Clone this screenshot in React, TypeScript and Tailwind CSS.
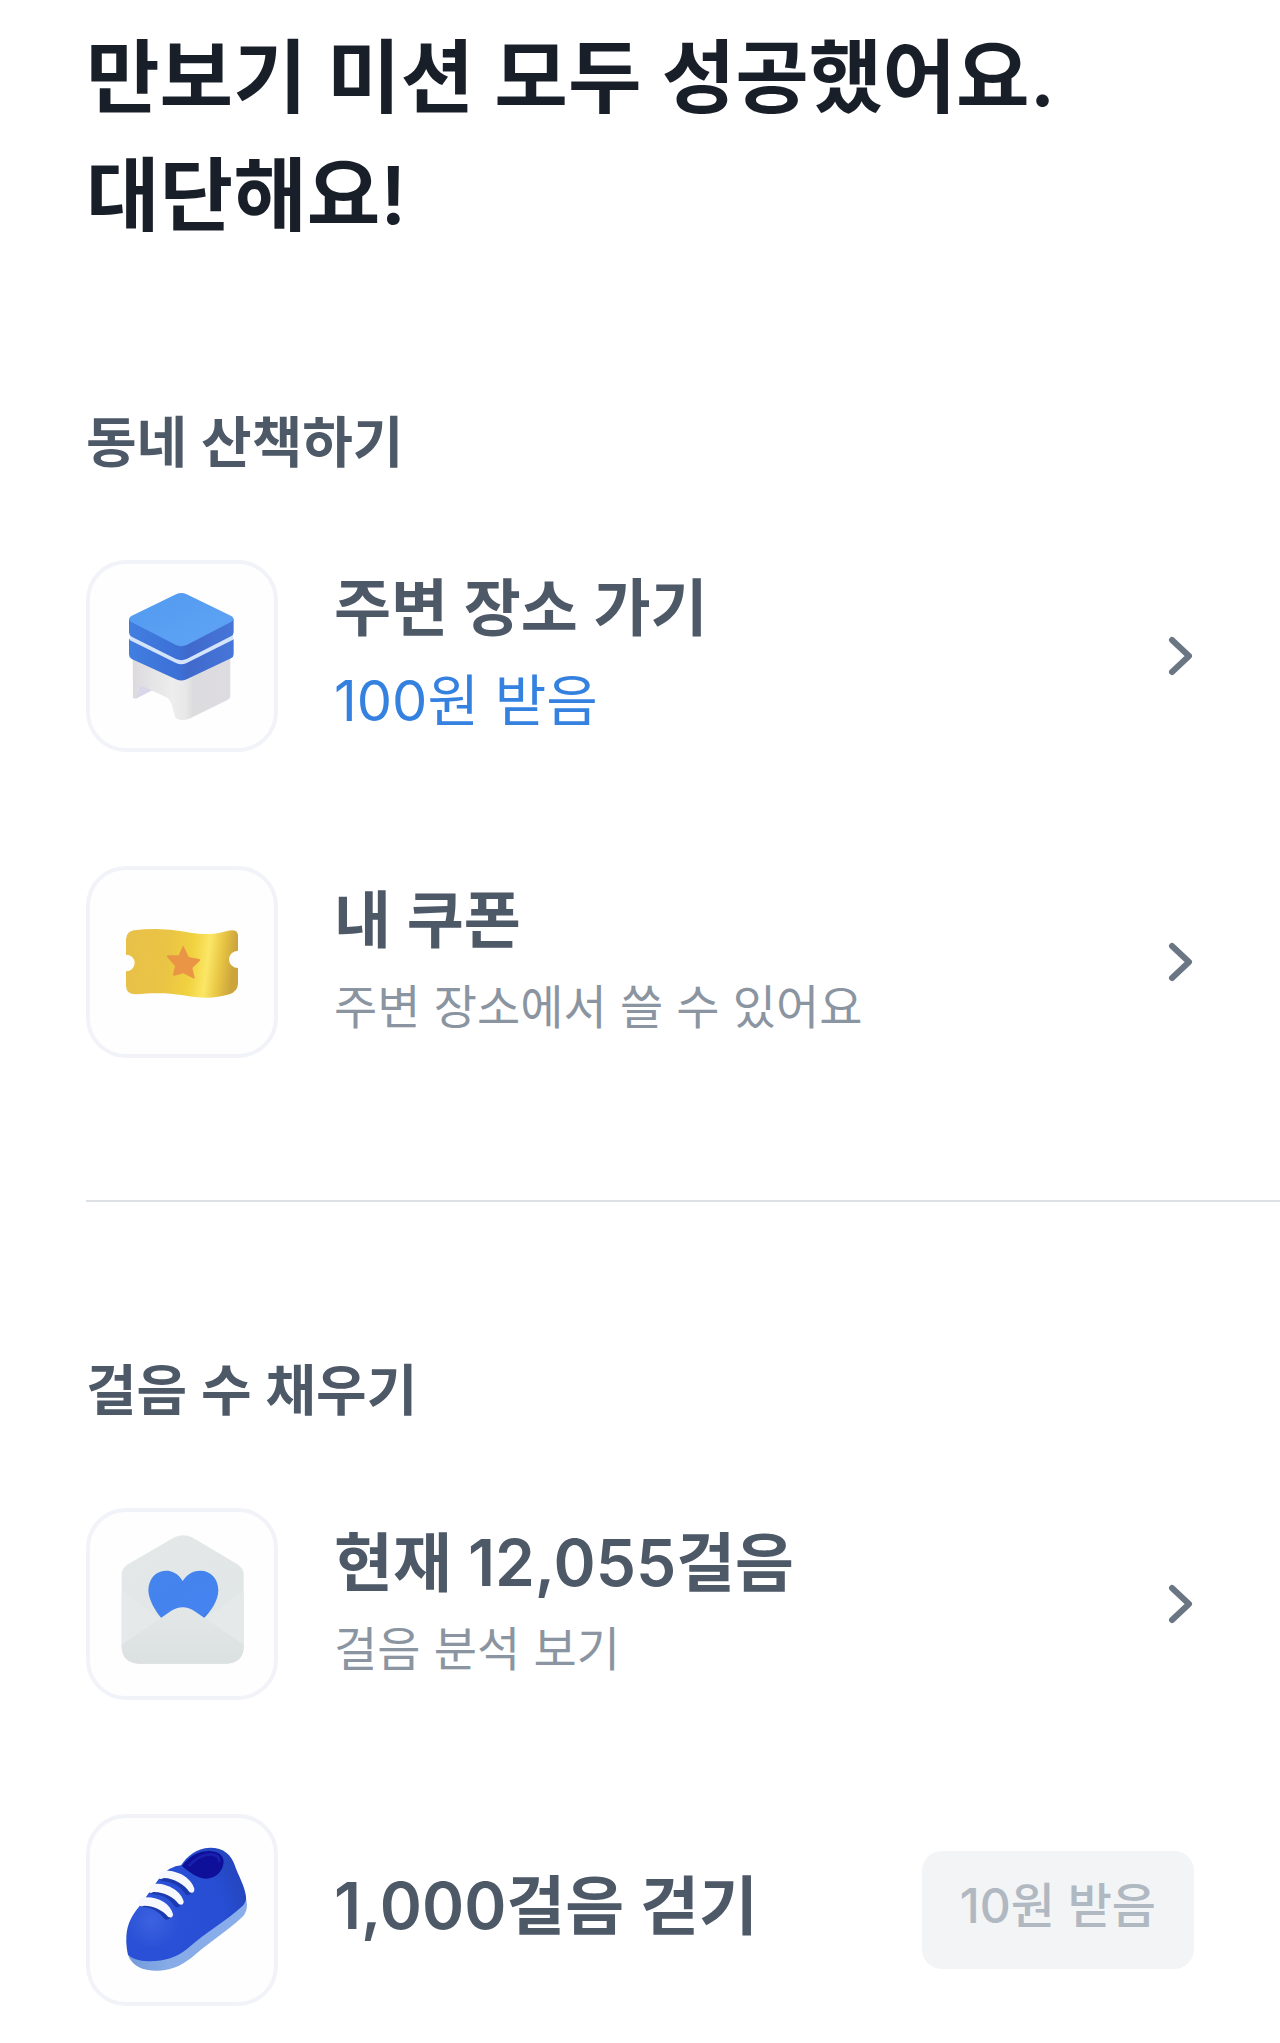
import type { ReactNode } from "react";

const fontStack = "font-[Inter,'Noto_Sans_CJK_KR',sans-serif]";

function StoolIcon() {
  return (
    <svg viewBox="60 57 552 552" className="h-full w-full" aria-hidden="true">
      <defs>
        <linearGradient id="stool-top" x1="0" y1="0" x2="1" y2="1">
          <stop offset="0" stopColor="#529bf0" />
          <stop offset="1" stopColor="#5fa3f5" />
        </linearGradient>
        <linearGradient id="stool-side" x1="0" y1="0" x2="1" y2="0">
          <stop offset="0" stopColor="#427ee0" />
          <stop offset="0.48" stopColor="#3c70d6" />
          <stop offset="0.56" stopColor="#4069cc" />
          <stop offset="1" stopColor="#4676d8" />
        </linearGradient>
        <linearGradient id="stool-leg" x1="0" y1="0" x2="1" y2="0">
          <stop offset="0" stopColor="#dcdade" />
          <stop offset="0.4" stopColor="#ededed" />
          <stop offset="0.54" stopColor="#e9e8e9" />
          <stop offset="0.62" stopColor="#dcdbdd" />
          <stop offset="1" stopColor="#dedce2" />
        </linearGradient>
      </defs>
      <path d="M196 462L250 434V400H196Z" fill="#d9d6ea" />
      <path
        d="M188 310H481V452Q481 460 474 464L356 522Q334 528 320 521Q315 518 312 504L305 478Q300 462 286 455L222 425Q212 421 208 430L200 456Q197 463 189 459Z"
        fill="url(#stool-leg)"
      />
      <path
        d="M177 288Q177 276 190 280H480Q491 276 491 288V328Q491 336 483 340L350 403Q334 410 318 403L185 342Q177 338 177 328Z"
        fill="url(#stool-side)"
      />
      <path d="M180 262H489V284L350 354Q334 362 318 354L180 286Z" fill="#d4e4fc" />
      <path
        d="M177 222H491V262Q491 270 483 274L350 342Q334 349 318 342L185 275Q177 271 177 262Z"
        fill="url(#stool-side)"
      />
      <path
        d="M318 148Q334 140 350 148L484 213Q497 221 484 230L350 300Q334 307 318 300L184 231Q171 222 184 213Z"
        fill="url(#stool-top)"
      />
    </svg>
  );
}

function CouponIcon() {
  return (
    <svg viewBox="60 60 552 552" className="h-full w-full" aria-hidden="true">
      <defs>
        <linearGradient id="coupon" x1="0" y1="0" x2="1" y2="0.08">
          <stop offset="0" stopColor="#e8c04a" />
          <stop offset="0.4" stopColor="#eac444" />
          <stop offset="0.62" stopColor="#f1d240" />
          <stop offset="0.76" stopColor="#fbe666" />
          <stop offset="0.88" stopColor="#e8c544" />
          <stop offset="1" stopColor="#cba43c" />
        </linearGradient>
      </defs>
      <path
        d="M168 266Q170 245 192 241Q270 231 345 245C390 255 435 254 462 245Q503 232 504 256V302A27 26 0 0 0 504 354V402Q502 425 478 433C430 448 385 444 340 436C290 427 240 429 196 433Q169 433 168 408V364A26 25 0 0 0 168 314Z"
        fill="url(#coupon)"
      />
      <path
        d="M341 289L356 321L388 327Q392 329 389 333L367 354L374 383Q373 387 369 385L340 370L313 377Q308 377 309 373L315 348L291 321Q289 316 294 316L326 316L338 289Q340 286 341 289Z"
        fill="#e99545"
      />
    </svg>
  );
}

function LetterIcon() {
  return (
    <svg viewBox="60 64 552 552" className="h-full w-full" aria-hidden="true">
      <defs>
        <linearGradient id="letter-back" x1="0" y1="0" x2="1" y2="1">
          <stop offset="0" stopColor="#e4e8e8" />
          <stop offset="1" stopColor="#e0e5e5" />
        </linearGradient>
        <linearGradient id="letter-front" x1="0" y1="0" x2="0" y2="1">
          <stop offset="0" stopColor="#e3e7e7" />
          <stop offset="1" stopColor="#dbe0e1" />
        </linearGradient>
        <linearGradient id="letter-heart" x1="0" y1="0" x2="1" y2="1">
          <stop offset="0" stopColor="#4484ec" />
          <stop offset="0.85" stopColor="#4583f0" />
          <stop offset="1" stopColor="#315fc0" />
        </linearGradient>
      </defs>
      <path
        d="M313 140Q340 127 366 140L502 221Q521 233 521 252V470Q519 516 470 519H206Q158 516 155 470V252Q155 233 174 221Z"
        fill="url(#letter-back)"
      />
      <path d="M155 300V462L272 384ZM521 300V462L402 384Z" fill="#e5e9e9" />
      <path
        d="M338 271C324 247 305 240 288 240C254 240 235 268 235 300C237 330 256 360 274 382H402C424 360 445 330 445 298C444 264 423 240 391 240C365 240 350 253 338 271Z"
        fill="url(#letter-heart)"
      />
      <path
        d="M155 462L302 362Q338 338 374 362L521 462V472Q519 516 470 519H206Q158 516 155 472Z"
        fill="url(#letter-front)"
      />
    </svg>
  );
}

function ShoeIcon() {
  return (
    <svg viewBox="60 52 552 552" className="h-full w-full" aria-hidden="true">
      <defs>
        <radialGradient id="shoe-body" gradientUnits="userSpaceOnUse" cx="245" cy="360" r="280">
          <stop offset="0" stopColor="#3d62e0" />
          <stop offset="0.3" stopColor="#2950d6" />
          <stop offset="0.8" stopColor="#264dd2" />
          <stop offset="1" stopColor="#2547c2" />
        </radialGradient>
        <linearGradient id="shoe-sole" x1="0" y1="0" x2="1" y2="0">
          <stop offset="0" stopColor="#7299da" />
          <stop offset="0.35" stopColor="#86abe6" />
          <stop offset="1" stopColor="#8aaeec" />
        </linearGradient>
      </defs>
      <path
        d="M169 420L174 462C186 497 220 511 265 510C310 509 345 488 375 462C425 420 475 389 516 350Q532 335 531 310L524 270Z"
        fill="url(#shoe-sole)"
      />
      <path
        d="M169 420C168 380 180 350 207 318L268 233Q300 195 333 194C350 168 378 143 420 141C462 141 484 163 494 193C505 225 524 255 528 288Q530 305 515 318C465 363 405 396 350 446C320 471 280 483 235 482Q190 480 174 462Q169 445 169 420Z"
        fill="url(#shoe-body)"
      />
      <path d="M336 196C360 163 390 150 420 151C447 153 461 165 461 184C459 211 438 234 408 234C378 232 357 213 336 196Z" fill="#0f109a" />
      <path d="M356 196C380 170 402 160 425 161C444 163 449 171 448 184" stroke="#1920ad" strokeWidth="8" fill="none" />
      <g fill="none" stroke="#1c39ae" strokeWidth="20" strokeLinecap="round">
        <path d="M280 232Q325 234 354 273" />
        <path d="M248 270Q296 272 322 310" />
        <path d="M218 308Q264 311 290 347" />
      </g>
      <g fill="#f7f8fd">
        <path d="M266 226Q268 210 288 210C329 210 365 234 373 264Q374 280 359 275C342 250 312 233 282 232Q264 240 266 226Z" />
        <path d="M235 266Q238 250 256 249C297 248 334 273 341 302Q341 316 327 311C311 288 280 273 250 274Q235 282 235 266Z" />
        <path d="M204 306Q206 291 224 290C266 288 302 310 309 341Q309 354 295 349C278 328 250 315 222 315Q206 321 204 306Z" />
      </g>
    </svg>
  );
}

function Chevron() {
  return (
    <svg viewBox="0 0 26 42" className="h-[42px] w-[26px] shrink-0" fill="none" aria-hidden="true">
      <path d="M4 5L21 21L4 37" stroke="#6b7684" strokeWidth="6" strokeLinecap="round" strokeLinejoin="round" />
    </svg>
  );
}

function IconTile({ children }: { children: ReactNode }) {
  return (
    <div className="size-48 shrink-0 overflow-hidden rounded-[40px] border-4 border-[#f1f3f8] bg-[#fefefe]">
      {children}
    </div>
  );
}

interface RowLinkProps {
  icon: ReactNode;
  title: string;
  large?: boolean;
  children: ReactNode;
}

function RowLink({ icon, title, large = false, children }: RowLinkProps) {
  return (
    <a href="#" className="flex items-center gap-14">
      <IconTile>{icon}</IconTile>
      <div className="flex min-w-0 flex-1 flex-col gap-1.5 pb-1">
        <p className={`leading-[88px] font-semibold text-[#4e5968] ${large ? "text-[64px]" : "text-[62px]"}`}>
          {title}
        </p>
        {children}
      </div>
      <Chevron />
    </a>
  );
}

function SectionTitle({ children }: { children: ReactNode }) {
  return <h2 className="text-[55px] leading-[80px] font-semibold text-[#4e5968]">{children}</h2>;
}

export default function App() {
  return (
    <main className={`bg-white pt-[18px] pb-9 text-[#191f28] ${fontStack}`}>
      <h1 className="px-[86px] text-[80px] leading-[118px] font-semibold">
        만보기 미션 모두 성공했어요.
        <br />
        대단해요!
      </h1>

      <section className="mt-[148px] px-[86px]">
        <SectionTitle>동네 산책하기</SectionTitle>
        <div className="mt-[78px] flex flex-col gap-[114px]">
          <RowLink icon={<StoolIcon />} title="주변 장소 가기">
            <p className="text-[56px] leading-[84px] text-[#3581e0]">100원 받음</p>
          </RowLink>
          <RowLink icon={<CouponIcon />} title="내 쿠폰">
            <p className="text-[47px] leading-[72px] text-[#8b95a1]">주변 장소에서 쓸 수 있어요</p>
          </RowLink>
        </div>
      </section>

      <hr className="mt-[142px] ml-[86px] border-t-2 border-[#dde0e4]" />

      <section className="mt-[148px] px-[86px]">
        <SectionTitle>걸음 수 채우기</SectionTitle>
        <div className="mt-[78px] flex flex-col gap-[114px]">
          <RowLink icon={<LetterIcon />} title="현재 12,055걸음" large>
            <p className="text-[47px] leading-[72px] text-[#8b95a1]">걸음 분석 보기</p>
          </RowLink>
          <div className="flex items-center gap-14">
            <IconTile>
              <ShoeIcon />
            </IconTile>
            <p className="min-w-0 flex-1 pb-2 text-[64px] leading-[88px] font-semibold text-[#4e5968]">
              1,000걸음 걷기
            </p>
            <button
              type="button"
              disabled
              className="h-[118px] shrink-0 rounded-[20px] bg-[#f2f4f6] px-[38px] pb-2 text-[48px] font-medium text-[#b0b8c1]"
            >
              10원 받음
            </button>
          </div>
        </div>
      </section>
    </main>
  );
}
